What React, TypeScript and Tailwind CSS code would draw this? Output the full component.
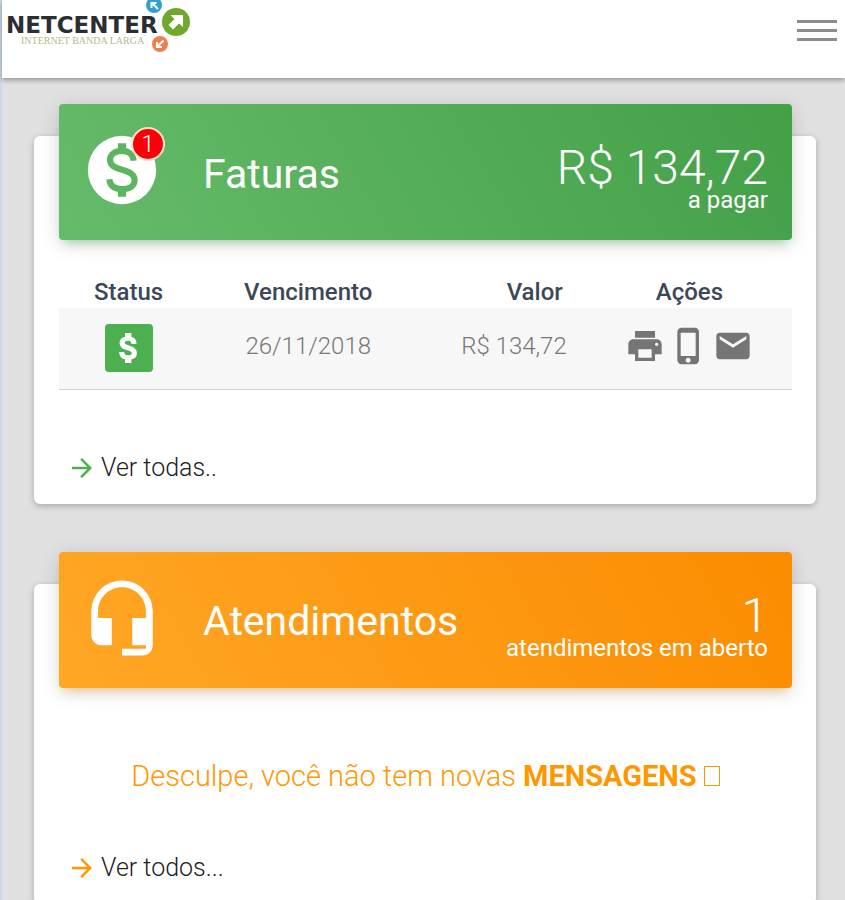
import type { ReactNode } from "react";
import {
  MdArrowForward,
  MdEmail,
  MdHeadsetMic,
  MdPhoneIphone,
  MdPrint,
} from "react-icons/md";

interface PanelProps {
  title: string;
  icon: ReactNode;
  headerClass: string;
  value: string;
  caption: string;
  children: ReactNode;
}

const invoices = [{ due: "26/11/2018", amount: "R$ 134,72" }];

function Logo() {
  return (
    <svg
      viewBox="0 0 190 52"
      className="h-13 w-[190px]"
      role="img"
      aria-label="Netcenter"
    >
      <text
        x="4"
        y="33"
        className="fill-[#2b2e33] font-['DejaVu_Sans'] text-[23px] font-bold"
      >
        NETCENTER
      </text>
      <text
        x="19"
        y="44"
        className="fill-[#b3bd8c] font-['Liberation_Serif'] text-[10px]"
      >
        INTERNET BANDA LARGA
      </text>
      {/* Blue circle */}
      <circle cx="152" cy="5" r="8" fill="#2f9fd0" />
      <path d="M156 9l-5-5M149.500 8V3H154.500" stroke="#fff" strokeWidth="2" fill="none" />
      {/* Green circle */}
      <circle cx="174" cy="22" r="14" fill="#6fa82c" />
      <path d="M181 15v12l-4-3.500-6 6-4.500-4.500 6-6-4-4z" fill="#fff" />
      {/* Orange circle */}
      <circle cx="158" cy="44" r="8" fill="#ec7f52" />
      <path d="M161.500 40.500L156 46M155 42v5h5" stroke="#fff" strokeWidth="2" fill="none" />
    </svg>
  );
}

function CoinIcon() {
  return (
    <svg viewBox="0 0 24 24" className="size-[82px]">
      <circle cx="12" cy="12" r="10" fill="#fff" />
      <g fill="none" stroke="#5db561">
        <path d="M12 4.200v2.300M12 17.500v2.300" strokeWidth="2.400" />
        <path
          d="M15.400 9.300C15.300 7.500 14 6.400 12 6.400c-2.100 0-3.500 1.100-3.500 2.600 0 1.800 1.600 2.400 3.500 2.900 2.100.500 3.700 1.200 3.700 3.100 0 1.600-1.400 2.600-3.600 2.600-2.400 0-3.700-1.100-3.800-2.900"
          strokeWidth="1.800"
        />
      </g>
    </svg>
  );
}

function DollarIcon() {
  return (
    <svg viewBox="0 0 24 24" className="size-[38px]" fill="currentColor" stroke="currentColor">
      <path d="M11.800 10.900c-2.270-.590-3-1.200-3-2.150 0-1.090 1.010-1.850 2.700-1.850 1.780 0 2.440.850 2.500 2.100h2.210c-.070-1.720-1.120-3.300-3.210-3.810V3h-3v2.160c-1.940.420-3.500 1.680-3.500 3.610 0 2.310 1.910 3.460 4.700 4.130 2.500.600 3 1.480 3 2.410 0 .690-.490 1.790-2.700 1.790-2.060 0-2.870-.920-2.980-2.100h-2.200c.120 2.190 1.760 3.420 3.680 3.830V21h3v-2.150c1.950-.370 3.500-1.500 3.500-3.550 0-2.840-2.430-3.810-4.700-4.400z" />
    </svg>
  );
}

function Panel({ title, icon, headerClass, value, caption, children }: PanelProps) {
  return (
    <section className="rounded-md bg-white pr-6 pl-[25px] shadow-[0_2px_6px_rgba(0,0,0,0.25)]">
      {/* Colored header, pulled above the card */}
      <div
        className={`-mt-8 flex h-[136px] items-center rounded pr-6 pl-[22px] text-white ${headerClass}`}
      >
        <div className="pb-1">{icon}</div>
        <h2 className="ml-10 pt-1 text-[41px] leading-none">{title}</h2>
        <div className="ml-auto pt-4 text-right">
          <p className="text-[48px] leading-10 font-light">{value}</p>
          <p className="text-[24px] leading-6">{caption}</p>
        </div>
      </div>
      {children}
    </section>
  );
}

function MoreLink({ label, iconClass }: { label: string; iconClass: string }) {
  return (
    <a
      href="#"
      className="ml-2 inline-flex items-center gap-1 text-[25px] leading-8 font-light text-[#222]"
    >
      <MdArrowForward size={30} className={iconClass} />
      {label}
    </a>
  );
}

export default function App() {
  return (
    <div className="min-h-screen border-l-2 border-[#cbd8e6] bg-[#e0e0e0] font-[Roboto,sans-serif]">
      {/* Top bar */}
      <header className="flex h-[78px] items-start justify-between bg-white pr-2 shadow-[0_2px_5px_rgba(0,0,0,0.35)]">
        <a href="#">
          <Logo />
        </a>
        <button aria-label="Menu" className="mt-5 flex flex-col gap-[6px]">
          <span className="block h-[3px] w-10 bg-[#8c8c8c]" />
          <span className="block h-[3px] w-10 bg-[#8c8c8c]" />
          <span className="block h-[3px] w-10 bg-[#8c8c8c]" />
        </button>
      </header>

      <main className="flex flex-col gap-20 pt-[58px] pr-[29px] pl-8">
        <Panel
          title="Faturas"
          icon={
            <div className="relative">
              <CoinIcon />
              <span className="absolute -top-0.5 -right-0.5 flex size-[34px] items-center justify-center rounded-full border-2 border-[#ffe0d0] bg-[#fb0006] text-[24px] leading-none font-light">
                1
              </span>
            </div>
          }
          headerClass="bg-[linear-gradient(60deg,#66bb6a,#43a047)] shadow-[0_4px_20px_rgba(0,0,0,0.14),0_7px_10px_-5px_rgba(76,175,80,0.4)]"
          value="R$ 134,72"
          caption="a pagar"
        >
          <table className="mt-9 w-full table-fixed text-[24px]">
            <thead>
              <tr className="text-[#3c4858]">
                <th className="w-[19%] leading-8 font-medium">Status</th>
                <th className="w-[30%] leading-8 font-medium">Vencimento</th>
                <th className="w-[23%] pr-6 text-right leading-8 font-medium">Valor</th>
                <th className="w-[28%] leading-8 font-medium">Ações</th>
              </tr>
            </thead>
            <tbody>
              {invoices.map((invoice) => (
                <tr
                  key={invoice.due}
                  className="h-[81px] border-b border-[#d4d4d4] bg-[#f7f7f7] font-light text-[#777]"
                >
                  <td>
                    <span className="mx-auto flex size-12 items-center justify-center rounded bg-[#4caf50] text-white">
                      <DollarIcon />
                    </span>
                  </td>
                  <td className="pb-1 text-center">{invoice.due}</td>
                  <td className="pr-5 pb-1 text-right">{invoice.amount}</td>
                  <td className="pb-1">
                    <div className="flex justify-center gap-1 text-[#757575]">
                      <button aria-label="Imprimir">
                        <MdPrint size={40} />
                      </button>
                      <button aria-label="Enviar por SMS">
                        <MdPhoneIphone size={40} />
                      </button>
                      <button aria-label="Enviar por e-mail">
                        <MdEmail size={40} />
                      </button>
                    </div>
                  </td>
                </tr>
              ))}
            </tbody>
          </table>
          <div className="flex pt-[62px] pb-5">
            <MoreLink label="Ver todas.." iconClass="text-[#4caf50]" />
          </div>
        </Panel>

        <Panel
          title="Atendimentos"
          icon={<MdHeadsetMic size={82} />}
          headerClass="bg-[linear-gradient(60deg,#ffa726,#fb8c00)] shadow-[0_4px_20px_rgba(0,0,0,0.14),0_7px_10px_-5px_rgba(255,152,0,0.4)]"
          value="1"
          caption="atendimentos em aberto"
        >
          <p className="mt-[70px] text-center text-[29px] leading-9 font-light text-[#ff9800]">
            Desculpe, você não tem novas <strong className="font-bold">MENSAGENS</strong>{" "}
            <span className="inline-block h-5 w-4 border border-[#ff9800]" />
          </p>
          <div className="flex pt-[58px] pb-5">
            <MoreLink label="Ver todos..." iconClass="text-[#ff9800]" />
          </div>
        </Panel>
      </main>
    </div>
  );
}
